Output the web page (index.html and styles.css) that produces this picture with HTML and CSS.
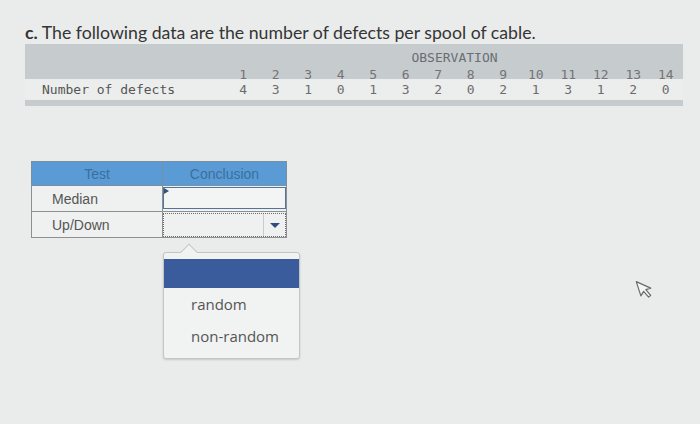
FILE: index.html
```html
<!DOCTYPE html>
<html>
<head>
<meta charset="utf-8">
<link rel="stylesheet" href="styles.css">
</head>
<body>
<div class="page">
  <h1 class="title"><b>c.</b> The following data are the number of defects per spool of cable.</h1>

  <div class="obs">
    <div class="band">
      <div class="grid">
        <div class="label"></div>
        <div class="obs-title">OBSERVATION</div>
      </div>
      <div class="grid nums">
        <div class="label"></div>
        <div>1</div><div>2</div><div>3</div><div>4</div><div>5</div><div>6</div><div>7</div>
        <div>8</div><div>9</div><div>10</div><div>11</div><div>12</div><div>13</div><div>14</div>
      </div>
    </div>
    <div class="grid vals">
      <div class="label">Number of defects</div>
      <div>4</div><div>3</div><div>1</div><div>0</div><div>1</div><div>3</div><div>2</div>
      <div>0</div><div>2</div><div>1</div><div>3</div><div>1</div><div>2</div><div>0</div>
    </div>
    <div class="rule"></div>
  </div>

  <table class="tests">
    <tr class="head"><th>Test</th><th>Conclusion</th></tr>
    <tr>
      <td class="name">Median</td>
      <td class="ans"><div class="input"><span class="caret"></span></div></td>
    </tr>
    <tr>
      <td class="name">Up/Down</td>
      <td class="ans"><div class="select"><span class="fill"></span><span class="arrowbox"><span class="arrow"></span></span></div></td>
    </tr>
  </table>
</div>

<div class="menu">
  <div class="notch"></div>
  <div class="sel"></div>
  <div class="opt">random</div>
  <div class="opt">non-random</div>
</div>

<svg class="cursor" width="18" height="24" viewBox="0 0 18 24">
  <path d="M2 2 L2 17 L6 13.5 L9 20.5 L11.5 19.5 L8.6 12.6 L13.8 12.6 Z" fill="#f4f4f4" stroke="#6a6a6a" stroke-width="1.2" stroke-linejoin="round"/>
</svg>
</body>
</html>
```

FILE: styles.css
```css
html, body {
  margin: 0;
  padding: 0;
}
body {
  width: 700px;
  height: 424px;
  overflow: hidden;
  background: #eaeceb;
  position: relative;
  font-family: "Liberation Sans", Arial, sans-serif;
}
.page {
  padding: 22px 0 0 25px;
}
.title {
  margin: 0;
  font-family: Lato, "Open Sans", sans-serif;
  font-weight: 400;
  font-size: 17.7px;
  line-height: 22px;
  color: #353535;
}
.title b {
  font-weight: 700;
}
.obs {
  margin-top: 0;
  width: 658px;
  font-family: "DejaVu Sans Mono", monospace;
  font-size: 13px;
  color: #747474;
}
.band {
  background: #c6cbce;
  padding-top: 6px;
  height: 29px;
}
.grid {
  display: grid;
  grid-template-columns: 202px repeat(14, 32.5px);
  align-items: center;
}
.grid > div {
  text-align: center;
  line-height: 15px;
}
.obs-title {
  grid-column: 2 / span 14;
  text-align: center;
  color: #6a6e72;
}
.nums {
  margin-top: 2px;
}
.vals {
  height: 20px;
  background: #eceeed;
}
.vals > div {
  color: #6c6c6c;
}
.vals .label {
  text-align: left;
  padding-left: 17px;
  color: #555;
}
.rule {
  margin-top: 1px;
  height: 6px;
  background: #c6cbce;
}
.tests {
  margin: 55px 0 0 6px;
  border-collapse: collapse;
  width: 256px;
  font-size: 14px;
}
.tests th {
  background: #5b9bd5;
  color: #3a6f9e;
  font-weight: 400;
  height: 23px;
  padding: 0;
  border: 1px solid #7a8f9f;
}
.tests th:first-child {
  width: 130px;
}
.tests td {
  border: 1px solid #8d8f90;
  height: 24px;
  padding: 0;
  background: #eff1f0;
  color: #555;
}
.tests td.name {
  padding-left: 20px;
}
.tests td.ans {
  position: relative;
  border-top: none;
}
.input {
  height: 20px;
  margin: 1px 0 2px 0;
  border: 1px solid #56739a;
  background: #f3f5f4;
}
.caret {
  position: absolute;
  left: 1px;
  top: 2px;
  width: 0;
  height: 0;
  border-top: 3px solid transparent;
  border-bottom: 3px solid transparent;
  border-left: 5px solid #34527c;
}
.select {
  display: flex;
  height: 22px;
  border: 1px dotted #6d6d6d;
  margin-top: 1px;
}
.fill {
  flex: 1;
}
.arrowbox {
  width: 21px;
  border-left: 1px solid #c9cccc;
  display: flex;
  align-items: center;
  justify-content: center;
}
.arrow {
  width: 0;
  height: 0;
  border-left: 5px solid transparent;
  border-right: 5px solid transparent;
  border-top: 5px solid #2f4e7e;
}
.menu {
  position: absolute;
  left: 163px;
  top: 252px;
  width: 135px;
  height: 105px;
  background: #f1f3f2;
  border: 1px solid #c4c6c6;
  border-radius: 3px;
  box-shadow: 0 1px 2px rgba(0,0,0,0.15);
  font-family: "Open Sans", sans-serif;
  font-size: 15px;
  color: #555;
}
.notch {
  position: absolute;
  left: 19px;
  top: -7px;
  width: 11px;
  height: 11px;
  background: #f1f3f2;
  border-left: 1px solid #c4c6c6;
  border-top: 1px solid #c4c6c6;
  transform: rotate(45deg);
}
.sel {
  position: relative;
  margin-top: 6px;
  height: 29px;
  background: #3b5c9c;
}
.opt {
  padding-left: 27px;
  line-height: 32px;
}
.cursor {
  position: absolute;
  left: 637px;
  top: 277px;
  transform: rotate(-18deg);
}
```
